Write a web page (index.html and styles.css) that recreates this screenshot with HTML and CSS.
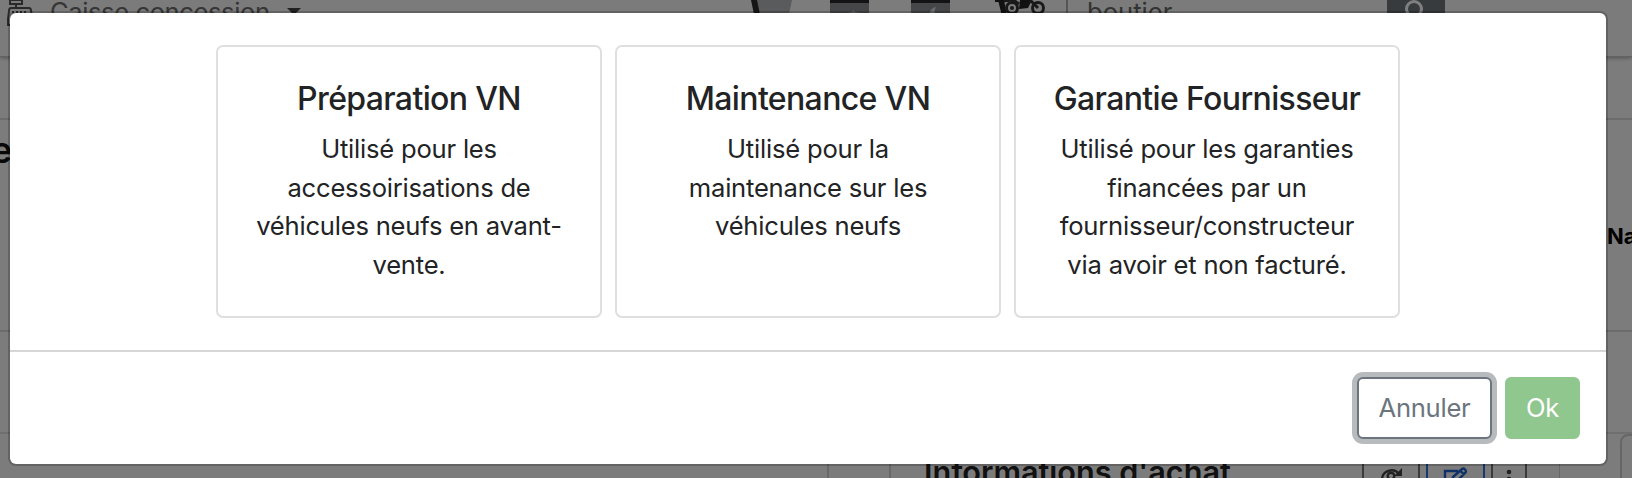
FILE: index.html
```html
<!DOCTYPE html>
<html lang="fr">
<head>
<meta charset="utf-8">
<title>Caisse concession</title>
<link rel="stylesheet" href="styles.css">
</head>
<body>
<div class="page">
  <header class="topbar">
    <svg class="register" width="28" height="28" viewBox="0 0 28 28" fill="none" stroke="#555" stroke-width="2"><path d="M3 0h12v4H3zM9 4v4M4 8h18q2 0 2 3l2 8v6H1v-6l1-8q0-3 2-3z"/><path d="M5 12h2m2 0h2m2 0h2m2 0h2" /></svg>
    <span class="shop">Caisse concession</span>
    <span class="caret"></span>
    <svg class="tools" width="308" height="24" viewBox="0 0 308 24">
      <path d="M16 0h36l-5 24H22z" fill="#b4b6b8"/><path d="M11 0h6l5 24h-6z" fill="#2a2a2a"/>
      <path d="M129 0h42v24h-42zM52 0h38v24H47z" fill="#fff" opacity=".25"/>
      <path d="M90 0h39v24H90zM171 0h39v24h-39z" fill="#8b8d90"/><path d="M90 0h39v3H90zM171 0h39v3h-39z" fill="#26262a"/>
      <path d="M108 13l4-1 1-2 2 2 5 1v2h-12z" fill="#c8c8c8"/><path d="M196 7c-5 1-7 5-6 9h7c-3-2-3-5-1-9z" fill="#d8d8d8"/>
      <path d="M258 0h6l3 16h-5zM280 0h12l-4 8-9 1z" fill="#222"/>
      <path d="M255 1h14" stroke="#222" stroke-width="2"/>
      <g fill="none" stroke="#333" stroke-width="3"><circle cx="272" cy="8" r="5.5"/><circle cx="298" cy="8" r="5.5"/><path d="M290 0l8 8M264 1q8-3 15 3"/></g><circle cx="272" cy="8" r="2" fill="#333"/>
    </svg>
    <div class="search"><span class="query">boutier</span><span class="go"><svg width="20" height="20" viewBox="0 0 20 20" fill="none" stroke="#fff" stroke-width="3"><circle cx="10" cy="9" r="7.5"/><path d="M15 14l5 5"/></svg></span></div>
  </header>
  <div class="band"></div>
  <div class="title-row"><b class="title-end">e</b></div>
  <div class="name-row"><b>Na</b></div>
  <div class="gap-row"></div>
  <div class="panels">
    <div class="panel-left"></div>
    <div class="panel-mid"></div>
    <section class="purchase">
      <h2>Informations d'achat</h2>
      <div class="actions">
        <span class="act refresh"><svg width="24" height="24" viewBox="0 0 24 24" fill="none" stroke="#444" stroke-width="2.4"><path d="M2 13a9.500 9.500 0 0 1 17-6"/><path d="M22 1v8h-8z" fill="#444" stroke="none"/><circle cx="11" cy="9" r="3.300"/></svg></span>
        <span class="act edit"><svg width="26" height="24" viewBox="0 0 26 24" fill="none" stroke="#1f63d0" stroke-width="2.4"><path d="M15 4H2v18h18v-8M9 15l1-5 9-8q1.500-1 3 .5t.5 3L14 14z M17 3.500l4 4"/></svg></span>
        <span class="act more"><svg width="6" height="24" viewBox="0 0 6 24" fill="#444"><circle cx="3" cy="5" r="2.300"/><circle cx="3" cy="12" r="2.300"/></svg></span>
      </div>
    </section>
    <div class="side-box"></div>
  </div>
</div>
<div class="backdrop">
  <div class="modal" role="dialog">
    <div class="modal-body">
      <article class="card"><h5>Préparation VN</h5><p>Utilisé pour les<br>accessoirisations de<br>véhicules neufs en avant-<br>vente.</p></article>
      <article class="card"><h5>Maintenance VN</h5><p>Utilisé pour la<br>maintenance sur les<br>véhicules neufs</p></article>
      <article class="card"><h5>Garantie Fournisseur</h5><p>Utilisé pour les garanties<br>financées par un<br>fournisseur/constructeur<br>via avoir et non facturé.</p></article>
    </div>
    <footer class="modal-footer">
      <button class="btn cancel">Annuler</button>
      <button class="btn ok">Ok</button>
    </footer>
  </div>
</div>
</body>
</html>
```
FILE: styles.css
```css
* { box-sizing: border-box; }
body { margin: 0; width: 1632px; height: 478px; overflow: hidden; font-family: Inter, "Liberation Sans", sans-serif; font-size: 25.6px; color: #222324; background: #fff; }
.page { height: 478px; overflow: hidden; background: #f9f9f9; }
.topbar { display: flex; align-items: flex-start; height: 57px; padding-left: 7px; background: #f6f6f6; border-bottom: 1px solid #c4c4c4; box-shadow: 0 1px 4px rgba(0,0,0,.35); }
.register { flex: none; }
.shop { flex: none; width: 221px; margin: -3px 0 0 15px; color: #6c6c6c; line-height: 30px; letter-spacing: -.42px; white-space: nowrap; }
.caret { margin: 8px 0 0 16px; border: 7px solid transparent; border-top-color: #444; border-bottom: 0; }
.tools { flex: none; margin-left: 439px; }
.search { display: flex; height: 40px; margin-left: 18px; border-left: 2px solid #aaa; }
.query { width: 319px; padding-left: 19px; line-height: 30px; margin-top: -3px; color: #666; }
.go { width: 58px; height: 36px; background: #70767c; padding: 0 0 0 17px; line-height: 0; }
.band { height: 61px; }
.title-row { height: 102px; border-top: 2px solid #d8d8d8; padding-top: 9px; }
.title-end { display: block; margin-left: -9px; font-size: 36px; line-height: 42px; font-weight: 600; color: #111; }
.name-row { height: 110px; display: flex; justify-content: flex-end; font-size: 22px; line-height: 32px; color: #000; }
.name-row b { width: 25px; }
.gap-row { height: 102px; border-top: 2px solid #d8d8d8; }
.panels { display: flex; height: 46px; border-top: 2px solid #dedede; }
.panels > * { flex: none; }
.panel-left { width: 829px; border-right: 2px solid #d0d0d0; }
.panel-mid { width: 62px; border-right: 2px solid #d0d0d0; }
.purchase { display: flex; width: 669px; border-right: 1px solid #d0d0d0; padding-left: 33px; }
.purchase h2 { flex: none; width: 438px; margin: 20px 0 0; font-size: 30.6px; font-weight: 600; line-height: 36px; white-space: nowrap; color: #222; }
.actions { display: flex; padding-top: 20px; }
.act { flex: none; height: 40px; border: 2px solid #777; padding-top: 11px; line-height: 0; }
.refresh { width: 58px; padding-left: 16px; }
.edit { width: 59px; margin-left: 6px; padding-left: 15px; border-color: #2f73e0; }
.more { width: 36px; margin-left: 6px; padding-left: 13px; }
.side-box { width: 40px; height: 60px; margin-left: 60px; border: 2px solid #cdcdcd; border-radius: 8px; }
.backdrop { position: absolute; inset: 0; padding: 11px 24px 0 8px; background: rgba(0,0,0,.5); }
.modal { width: 1600px; height: 455px; border: 2px solid rgba(0,0,0,.2); border-radius: 8px; background: #fff; background-clip: padding-box; }
.modal-body { display: flex; justify-content: center; gap: 13px; height: 337px; padding: 32px 0; }
.card { width: 386px; height: 273px; padding: 33px 0 31px; border: 2px solid #dfdfdf; border-radius: 7px; text-align: center; }
.card h5 { margin: 0 0 12px; font-size: 32px; line-height: 38.4px; font-weight: 540; letter-spacing: -.64px; white-space: nowrap; }
.card p { margin: 0; line-height: 38.4px; letter-spacing: -.22px; white-space: nowrap; }
.modal-footer { display: flex; justify-content: flex-end; gap: 13px; height: 114px; padding: 25px 26px; border-top: 2px solid #d6d6d6; }
.btn { height: 62px; padding: 0; font: 25.6px/38px Inter, sans-serif; letter-spacing: -.25px; border-radius: 6px; background: #fff; }
.cancel { width: 135px; border: 2px solid #6c757d; color: #6c757d; box-shadow: 0 0 0 5px #b8bbbe; }
.ok { width: 75px; border: 2px solid #90c78f; background: #90c78f; color: #fff; }
```
